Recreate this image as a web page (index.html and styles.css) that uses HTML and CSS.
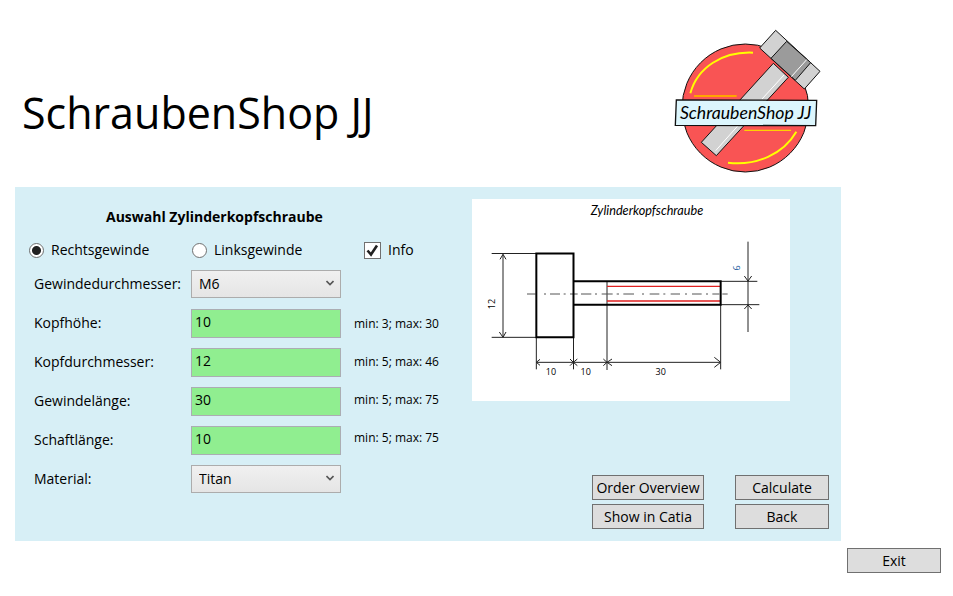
FILE: index.html
```html
<!DOCTYPE html>
<html lang="de">
<head>
<meta charset="utf-8">
<title>SchraubenShop JJ</title>
<link rel="stylesheet" href="styles.css">
</head>
<body>
<header class="header">
  <h1 class="title">SchraubenShop JJ</h1>
  <svg class="logo" viewBox="0 0 540 495" role="img" aria-label="SchraubenShop JJ Logo">
    <ellipse cx="256" cy="264" rx="190" ry="192" fill="#f95454" stroke="#111" stroke-width="3"/>
    <g fill="none" stroke="#ff0" stroke-width="6">
      <path d="M91 220C112 142 188 94 279 98"/>
      <path d="M204 428C290 438 370 402 409 335"/>
      <path d="M102 228H230" stroke="#ffa500"/>
      <path d="M253 331H393" stroke="#ffd200" stroke-width="4"/>
    </g>
    <g stroke="#111" stroke-width="3">
      <path d="M340 130L385 172L169 407L124 367Z" fill="#d2d2d2"/>
      <path d="M347 31L480 154L433 207L299 84Z" fill="#d2d2d2"/>
      <path d="M380 64L452 128L406 181L333 115Z" fill="#9b9b9b"/>
    </g>
    <path d="M372 165L306 237M249 300L167 392M440 119L394 170" fill="none" stroke="#fff" stroke-width="3"/>
    <path d="M49 240L470 241L467 317L46 316Z" fill="#dcf6fd" stroke="#111" stroke-width="4"/>
    <text class="logo-text" x="257" y="297" text-anchor="middle">SchraubenShop JJ</text>
  </svg>
</header>

<main class="panel">
  <form class="form" id="screw">
    <h2 class="heading">Auswahl Zylinderkopfschraube</h2>
    <div class="options">
      <label class="option"><input class="radio" type="radio" name="thread" checked>Rechtsgewinde</label>
      <label class="option"><input class="radio" type="radio" name="thread">Linksgewinde</label>
      <label class="option"><input class="check" type="checkbox" checked>Info
        <svg class="tick" viewBox="0 0 17 17" aria-hidden="true"><path d="M3.500 8.500L7 12.500L13 3.500" fill="none" stroke="#212121" stroke-width="2.600"/></svg>
      </label>
    </div>
    <div class="columns">
      <div class="fields">
        <label for="diameter">Gewindedurchmesser:</label>
        <div class="select-box">
          <select class="control select" id="diameter"><option>M6</option></select>
          <svg class="chevron" viewBox="0 0 8 6" aria-hidden="true"><path d="M.500 1L4 4.500L7.500 1" fill="none" stroke="#555" stroke-width="1.600"/></svg>
        </div>
        <label for="head-height">Kopfhöhe:</label>
        <input class="control text" id="head-height" type="text" value="10" aria-describedby="h1">
        <label for="head-diameter">Kopfdurchmesser:</label>
        <input class="control text" id="head-diameter" type="text" value="12" aria-describedby="h2">
        <label for="thread-length">Gewindelänge:</label>
        <input class="control text" id="thread-length" type="text" value="30" aria-describedby="h3">
        <label for="shaft-length">Schaftlänge:</label>
        <input class="control text" id="shaft-length" type="text" value="10" aria-describedby="h4">
        <label for="material">Material:</label>
        <div class="select-box">
          <select class="control select" id="material"><option>Titan</option></select>
          <svg class="chevron" viewBox="0 0 8 6" aria-hidden="true"><path d="M.500 1L4 4.500L7.500 1" fill="none" stroke="#555" stroke-width="1.600"/></svg>
        </div>
      </div>
      <div class="hints">
        <span id="h1">min: 3; max: 30</span>
        <span id="h2">min: 5; max: 46</span>
        <span id="h3">min: 5; max: 75</span>
        <span id="h4">min: 5; max: 75</span>
      </div>
    </div>
  </form>

  <section class="side">
    <svg class="drawing" viewBox="6 12 954 606" role="img" aria-label="Zylinderkopfschraube">
      <rect x="6" y="12" width="954" height="606" fill="#fff"/>
      <text class="drawing-title" x="531" y="59" text-anchor="middle">Zylinderkopfschraube</text>
      <g fill="none" stroke="#222" stroke-width="3">
        <path d="M65 175.500H199M65 427H199M99 178V425M199 427V523M310.500 427V523M310.500 329V427M411 259V525M752 330V523M201 502H750M752 259H862M752 329H868M834 140V411"/>
        <path d="M90 193L99 178L108 193M88 411L99 427L108 411M210 493L199 502L210 511M300 492L310 502L300 512M322 492L310 502L322 512M400 492L411 502L400 512M426 492L411 502L426 512M733 487L752 502L733 517M823 243L834 258L845 243M823 342L834 330L845 342"/>
        <path d="M171 297H197M222 297H228M240 297H270M281 297H287M300 297H323M333 297H364M375 297H381M395 297H428M440 297H447M460 297H492M516 297H522M539 297H568M580 297H586M602 297H630M645 297H651M666 297H695M708 297H714M727 297H748M757 297H773" stroke="#555"/>
      </g>
      <path d="M411 274H752M411 318H752" fill="none" stroke="#e02020" stroke-width="4"/>
      <g fill="none" stroke="#000" stroke-width="6">
        <path d="M199 175.500H310.500V427H199Z"/>
        <path d="M310 259H752V329H310"/>
      </g>
      <g class="dimension" text-anchor="middle">
        <text x="243" y="540">10</text>
        <text x="347" y="540">10</text>
        <text x="572" y="540">30</text>
        <text transform="translate(76 327) rotate(-90)">12</text>
        <text class="dimension-blue" transform="translate(811 219) rotate(-90)">6</text>
      </g>
    </svg>
    <div class="actions">
      <button class="button" type="button">Order Overview</button>
      <button class="button" type="button">Calculate</button>
      <button class="button" type="button">Show in Catia</button>
      <button class="button" type="button">Back</button>
    </div>
  </section>
</main>

<footer class="footer">
  <button class="button exit" type="button">Exit</button>
</footer>
</body>
</html>
```
FILE: styles.css
```css
* {
  box-sizing: border-box;
}

body {
  margin: 0;
  background: #fff;
  color: #000;
  font: 14px/20px "Segoe UI", "Open Sans", "Noto Sans", sans-serif;
}

button,
input,
select {
  font: inherit;
  color: inherit;
}

.header {
  display: flex;
  align-items: center;
  justify-content: space-between;
  padding: 20px 113px 2px 22px;
}

.title {
  margin: 0;
  padding-top: 20px;
  font-size: 43px;
  line-height: 60px;
  font-weight: 400;
}

.logo {
  width: 180px;
  height: 165px;
}

.logo-text {
  font: italic 53px "Segoe Print", Lato, cursive;
}

.panel {
  display: flex;
  justify-content: space-between;
  margin: 0 112px 0 15px;
  padding: 12px 12px 12px 14px;
  background: #d7eff6;
}

.form {
  padding-bottom: 35px;
}

.heading {
  margin: 8px 0 12px 77px;
  font-size: 14px;
  line-height: 20px;
  font-weight: 700;
}

.options {
  display: grid;
  grid-template-columns: 163px 172px auto;
  align-items: center;
  margin-bottom: 9px;
}

.option {
  position: relative;
  display: flex;
  align-items: center;
  gap: 7px;
  height: 22px;
}

.radio,
.check {
  appearance: none;
  flex: none;
  width: 15px;
  height: 15px;
  margin: 0;
  border: 1px solid #707070;
  border-radius: 50%;
  background: #fff;
}

.radio:checked {
  background: radial-gradient(circle, #212121 4px, #fff 5px);
}

.check {
  width: 17px;
  height: 17px;
  border-radius: 0;
}

.tick {
  position: absolute;
  left: 0;
  width: 17px;
  height: 17px;
  pointer-events: none;
}

.columns {
  display: flex;
  gap: 13px;
}

.fields {
  display: grid;
  grid-template-columns: 157px 150px;
  grid-auto-rows: 29px;
  row-gap: 10px;
  padding-left: 5px;
}

.fields label {
  line-height: 28px;
}

.control {
  width: 100%;
  height: 29px;
  border: 1px solid #abadb3;
  border-radius: 0;
}

.text {
  padding: 0 3px 4px;
  background: #90ee90;
}

.select-box {
  position: relative;
}

.select {
  appearance: none;
  height: 28px;
  padding: 0 7px;
  border-color: #acacac;
  background: linear-gradient(#f0f0f0, #e5e5e5);
}

.chevron {
  position: absolute;
  top: 10px;
  right: 7px;
  width: 8px;
  height: 6px;
  pointer-events: none;
}

.hints {
  display: grid;
  grid-auto-rows: 20px;
  row-gap: 18px;
  align-content: start;
  padding-top: 44px;
  font-size: 12px;
}

.side {
  display: flex;
  flex-direction: column;
  align-items: flex-end;
  justify-content: space-between;
}

.drawing {
  width: 318px;
  height: 202px;
  margin-right: 39px;
}

.drawing-title {
  font: italic 38px "Segoe Print", Lato, cursive;
}

.dimension {
  font-size: 27px;
}

.dimension-blue {
  fill: #1f5f9f;
}

.actions {
  display: grid;
  grid-template-columns: 112px 94px;
  gap: 4px 31px;
}

.button {
  height: 25px;
  padding: 0;
  border: 1px solid #707070;
  border-radius: 0;
  background: #ddd;
  line-height: 23px;
  white-space: nowrap;
}

.footer {
  display: flex;
  justify-content: flex-end;
  padding: 7px 12px 24px;
}

.exit {
  width: 94px;
}
```
